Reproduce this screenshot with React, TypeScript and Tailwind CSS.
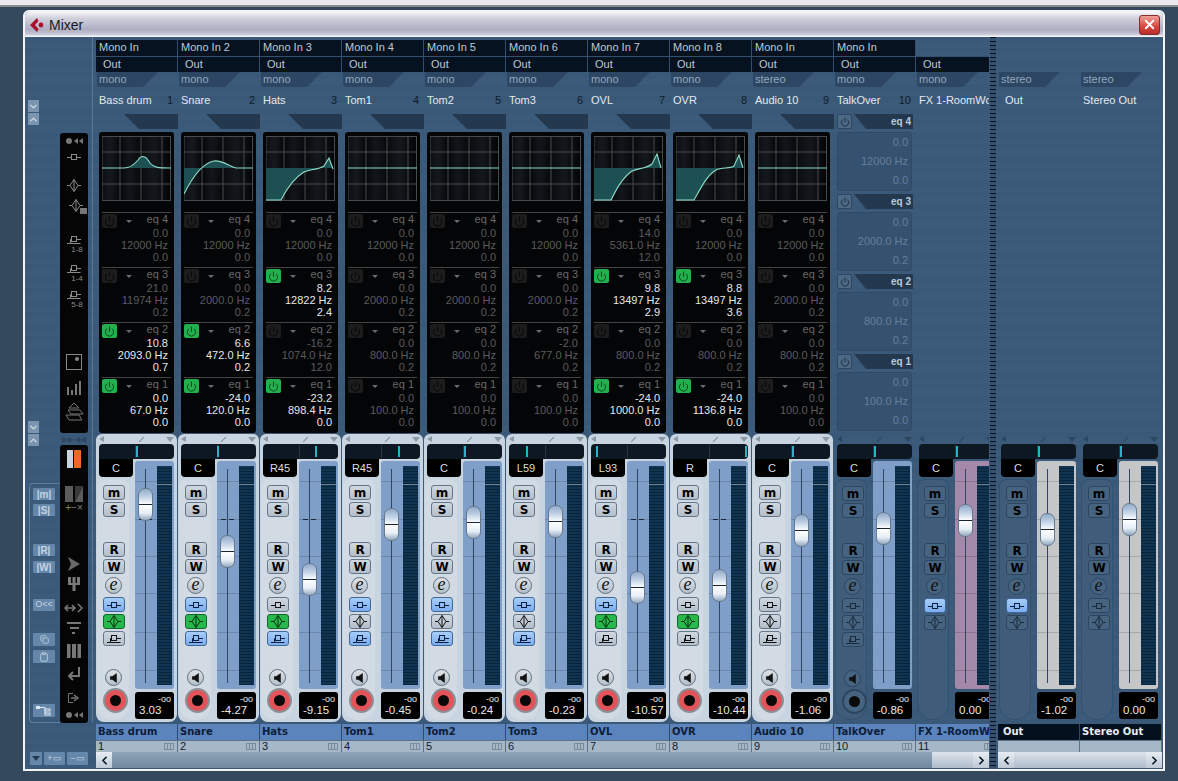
import React from 'react';
import { Power, X, ChevronLeft, ChevronRight, ChevronDown, ChevronUp, Copy, Clipboard } from 'lucide-react';

type Band = { v: [string, string, string]; on?: boolean };
type Strip = {
  input?: string;
  out: string;
  kind: string;
  name: string;
  num?: number;
  curve?: string;
  eq?: Band[];
  pan: string;
  tick: number;
  thumb: number;
  value: string;
  b1?: boolean;
  b2?: boolean;
  b3?: boolean;
  blueE?: boolean;
};

const d4: Band = { v: ['0.0', '12000 Hz', '0.0'] };
const d3: Band = { v: ['0.0', '2000.0 Hz', '0.2'] };
const d2: Band = { v: ['0.0', '800.0 Hz', '0.2'] };
const d1: Band = { v: ['0.0', '100.0 Hz', '0.0'] };

const strips: Strip[] = [
  {
    input: 'Mono In', out: 'Out', kind: 'mono', name: 'Bass drum', num: 1, pan: 'C', tick: 40, thumb: 487, value: '3.03', b1: true, b2: true,
    curve: 'M0 32 L22 32 C28 32 32 29 36 24 C41 17 45 22 48 27 C52 32 56 32 69 32',
    eq: [d4, { v: ['21.0', '11974 Hz', '0.2'] }, { v: ['10.8', '2093.0 Hz', '0.7'], on: true }, { v: ['0.0', '67.0 Hz', '0.0'], on: true }],
  },
  {
    input: 'Mono In 2', out: 'Out', kind: 'mono', name: 'Snare', num: 2, pan: 'C', tick: 39, thumb: 534, value: '-4.27', b1: true, b2: true, b3: true,
    curve: 'M0 58 C8 42 18 27 30 25 C38 24 45 30 52 32 L69 32',
    eq: [d4, d3, { v: ['6.6', '472.0 Hz', '0.2'], on: true }, { v: ['-24.0', '120.0 Hz', '0.0'], on: true }],
  },
  {
    input: 'Mono In 3', out: 'Out', kind: 'mono', name: 'Hats', num: 3, pan: 'R45', tick: 55, thumb: 562, value: '-9.15', b2: true, b3: true,
    curve: 'M0 64 L15 64 C20 54 28 42 38 36 C44 33 52 34 58 30 L63 22 L67 33',
    eq: [d4, { v: ['8.2', '12822 Hz', '2.4'], on: true }, { v: ['-16.2', '1074.0 Hz', '12.0'] }, { v: ['-23.2', '898.4 Hz', '0.0'], on: true }],
  },
  { input: 'Mono In 4', out: 'Out', kind: 'mono', name: 'Tom1', num: 4, pan: 'R45', tick: 56, thumb: 507, value: '-0.45', b1: true, b3: true, curve: 'M0 32 L69 32', eq: [d4, d3, d2, d1] },
  { input: 'Mono In 5', out: 'Out', kind: 'mono', name: 'Tom2', num: 5, pan: 'C', tick: 40, thumb: 505, value: '-0.24', b1: true, b3: true, curve: 'M0 32 L69 32', eq: [d4, d3, d2, d1] },
  {
    input: 'Mono In 6', out: 'Out', kind: 'mono', name: 'Tom3', num: 6, pan: 'L59', tick: 20, thumb: 504, value: '-0.23', b1: true, b3: true, curve: 'M0 32 L69 32',
    eq: [d4, d3, { v: ['-2.0', '677.0 Hz', '0.2'] }, d1],
  },
  {
    input: 'Mono In 7', out: 'Out', kind: 'mono', name: 'OVL', num: 7, pan: 'L93', tick: 8, thumb: 570, value: '-10.57', b1: true, b2: true,
    curve: 'M0 64 L17 64 C22 54 28 42 38 35 C44 32 52 33 58 28 L63 18 L67 32',
    eq: [{ v: ['14.0', '5361.0 Hz', '12.0'] }, { v: ['9.8', '13497 Hz', '2.9'], on: true }, d2, { v: ['-24.0', '1000.0 Hz', '0.0'], on: true }],
  },
  {
    input: 'Mono In 8', out: 'Out', kind: 'mono', name: 'OVR', num: 8, pan: 'R', tick: 75, thumb: 568, value: '-10.44', b2: true,
    curve: 'M0 64 L18 64 C24 54 30 40 40 34 C46 31 54 33 58 30 L63 19 L67 32',
    eq: [d4, { v: ['8.8', '13497 Hz', '3.6'], on: true }, d2, { v: ['-24.0', '1136.8 Hz', '0.0'], on: true }],
  },
  { input: 'Mono In', out: 'Out', kind: 'stereo', name: 'Audio 10', num: 9, pan: 'C', tick: 40, thumb: 513, value: '-1.06', blueE: true, curve: 'M0 32 L69 32', eq: [d4, d3, d2, d1] },
];

const gridX = [0, 18, 39, 60, 68.5];
const gridY = [0.5, 16, 48, 64.5];
const ticks = [20, 58, 95, 132, 171, 209];

function EqCurve({ d }: { d: string }) {
  return (
    <svg width="69" height="65" viewBox="0 0 69 65" className="block bg-[linear-gradient(to_right,#0b0e12,#15191e_12%,#05070a_26%,#12161b_40%,#080a0d_55%,#14181c_75%,#020304)]">
      {gridX.map((x) => <line key={x} x1={x} x2={x} y1="0" y2="65" stroke="#474c4a" strokeWidth="1" />)}
      {gridY.map((y) => <line key={y} x1="0" x2="69" y1={y} y2={y} stroke="#474c4a" strokeWidth="1" />)}
      <path d={d + ' L69 32 L0 32 Z'} fill="#1d5053" />
      <path d={d} fill="none" stroke="#8fdcc8" strokeWidth="1.1" />
    </svg>
  );
}

function EqBand({ band, n }: { band: Band; n: number }) {
  const valueColor = band.on ? 'text-[#e8e8e8]' : 'text-[#5c5c5c]';
  return (
    <div className="h-[55px] mx-[3px] border-t border-[#444] flex flex-col">
      <div className="h-[14px] flex items-start">
        <div className={band.on ? 'w-[15px] h-[14px] mt-[1px] rounded-[2px] bg-[#23b04c] flex items-center justify-center' : 'w-[15px] h-[14px] mt-[1px] rounded-[2px] bg-[#1c1c1c] flex items-center justify-center'}>
          <Power size={11} strokeWidth={2} className={band.on ? 'text-[#0b3d1b]' : 'text-[#050505]'} />
        </div>
        <div className="ml-[9px] mt-[7px] w-0 h-0 border-x-[3px] border-x-transparent border-t-[3px] border-t-[#6a6a6a]" />
        <span className="ml-auto mt-[1px] pr-[3px] text-[11px] leading-[11px] text-[#686868]">eq {n}</span>
      </div>
      {band.v.map((t, i) => (
        <div key={i} className={'h-[12px] leading-[12px] text-right pr-[3px] text-[11px] whitespace-nowrap ' + valueColor}>{t}</div>
      ))}
    </div>
  );
}

function HiGlyph() {
  return (
    <svg width="16" height="10" viewBox="0 0 16 10" fill="none" stroke="currentColor" strokeWidth="1">
      <path d="M1 5.5h4M11 5.5h4" />
      <rect x="5.5" y="2.5" width="5" height="5" />
    </svg>
  );
}

function MidGlyph() {
  return (
    <svg width="16" height="13" viewBox="0 0 16 13" fill="none" stroke="currentColor" strokeWidth="1">
      <path d="M1 6.5h3M12 6.5h3M8 .5L12 6.5 8 12.5 4 6.5Z M8 .5v12" />
    </svg>
  );
}

function LoGlyph() {
  return (
    <svg width="16" height="11" viewBox="0 0 16 11" fill="none" stroke="currentColor" strokeWidth="1">
      <path d="M1 9.5h3.5V5.5h1M10.5 5.5h4.5M4.5 9.5h10" />
      <rect x="5.5" y="2.5" width="5" height="5" />
    </svg>
  );
}

function KeyBtn({ label, dark, className }: { label: string; dark: boolean; className?: string }) {
  return (
    <div className={(dark
      ? 'bg-[#46637f] border-[#2c4660] '
      : 'bg-[linear-gradient(to_bottom,#cfd7df,#b4bfca)] border-[#66768a] ') + 'w-[22px] h-[15px] border rounded-[3px] flex items-center justify-center text-[12px] leading-none font-bold text-black font-[\'DejaVu_Sans\',sans-serif] ' + (className ?? '')}>
      {label}
    </div>
  );
}

function ModeBtn({ state, dark, className, children }: { state: 'off' | 'blue' | 'green'; dark: boolean; className?: string; children: React.ReactNode }) {
  let look = 'bg-[linear-gradient(to_bottom,#cfd7df,#b4bfca)] border-[#66768a] text-[#111]';
  if (dark) look = 'bg-[#46637f] border-[#2c4660] text-[#1a2a3a]';
  if (state === 'blue') look = 'bg-[linear-gradient(to_bottom,#a6cdfa,#7cadee)] border-[#3f6797] text-[#0a2040]';
  if (state === 'green') look = 'bg-[#28b84c] border-[#13652b] text-[#05300f]';
  return <div className={'w-[22px] h-[15px] border rounded-[3px] flex items-center justify-center ' + look + ' ' + (className ?? '')}>{children}</div>;
}

function Round({ dark, className, children }: { dark: boolean; className?: string; children: React.ReactNode }) {
  return (
    <div className={(dark ? 'bg-[#46637f] border-[#2c4660] ' : 'bg-[linear-gradient(to_bottom,#dde2e7,#b4bfca)] border-[#5f6e7e] ') + 'w-[17px] h-[17px] ml-[2px] rounded-full border flex items-center justify-center ' + (className ?? '')}>
      {children}
    </div>
  );
}

function ChannelFader({ s, dark, mode, trackClass }: { s: Strip; dark: boolean; mode: 'full' | 'out'; trackClass: string }) {
  return (
    <div className={(dark ? '' : 'bg-[#c8d4df] ') + 'mt-[1px] w-[81px] h-[288px] rounded-t-[6px] rounded-b-[8px] flex flex-col'}>
      <div className="h-[10px] flex items-center px-[3px]">
        <div className={dark ? 'w-0 h-0 border-y-[3px] border-y-transparent border-r-[5px] border-r-[#2c4660]' : 'w-0 h-0 border-y-[3px] border-y-transparent border-r-[5px] border-r-[#8c9aa8]'} />
        <div className={dark ? 'ml-[34px] w-[7px] h-px -rotate-45 bg-[#2c4660]' : 'ml-[34px] w-[7px] h-px -rotate-45 bg-[#7f8e9d]'} />
        <div className={dark ? 'ml-auto w-0 h-0 border-x-[4px] border-x-transparent border-t-[5px] border-t-[#2c4660]' : 'ml-auto w-0 h-0 border-x-[4px] border-x-transparent border-t-[5px] border-t-[#8c9aa8]'} />
      </div>
      <div className="relative mx-[3px] h-[15px] rounded-t-[4px] rounded-br-[4px] bg-[#0e1822]">
        <div className="absolute left-[36px] top-[1px] w-px h-[13px] bg-[#2a3440]" />
        <div className="absolute top-[2px] w-[2px] h-[11px] bg-[#23b5c8]" style={{ left: s.tick - 3 }} />
      </div>
      <div className="flex">
        <div className="ml-[3px] w-[34px]">
          <div className="h-[18px] bg-black rounded-b-[4px] flex items-center justify-center text-[11px] text-[#dcdcdc] leading-none">{s.pan}</div>
          <div className={(dark ? 'bg-[#3f5c7a] border border-[#33506c] ' : 'bg-[#d2dbe3] ') + '-ml-[2px] mt-[2px] w-[32px] h-[241px] rounded-t-[8px] rounded-b-[15px] pt-[6px] pl-[6px] flex flex-col items-start'}>
            <KeyBtn label="m" dark={dark} />
            <KeyBtn label="S" dark={dark} className="mt-[2px]" />
            <KeyBtn label="R" dark={dark} className="mt-[25px]" />
            <KeyBtn label="W" dark={dark} className="mt-[2px]" />
            <Round dark={dark} className={s.blueE ? 'mt-[3px] !bg-[#7cadee]' : 'mt-[3px]'}>
              <span className="font-['Liberation_Serif',serif] italic text-[18px] leading-none text-[#111] -mt-[4px]">e</span>
            </Round>
            <ModeBtn dark={dark} state={s.b1 ? 'blue' : 'off'} className="mt-[3px]"><HiGlyph /></ModeBtn>
            <ModeBtn dark={dark} state={s.b2 ? 'green' : 'off'} className="mt-[2px]"><MidGlyph /></ModeBtn>
            {mode === 'full' && <ModeBtn dark={dark} state={s.b3 ? 'blue' : 'off'} className="mt-[2px]"><LoGlyph /></ModeBtn>}
            {mode === 'full' && (
              <Round dark={dark} className="mt-[23px]">
                <svg width="10" height="10" viewBox="0 0 9 9" fill="#111"><path d="M1 3h2l4-3v9L3 6H1Z" /></svg>
              </Round>
            )}
            {mode === 'full' && (
              <div className={(dark ? 'bg-[#46637f] border-[#2c4660] ' : 'bg-[#e2545a] border-[#8a8f96] ') + 'mt-[2px] w-[25px] h-[25px] rounded-full border-2 flex items-center justify-center'}>
                <div className="w-[11px] h-[11px] rounded-full bg-[#0a0a0a]" />
              </div>
            )}
          </div>
        </div>
        <div className="ml-[2px] w-[39px] pt-[2px]">
          <div className={'relative h-[228px] rounded-[3px] ' + trackClass}>
            {ticks.map((t) => <div key={t} className="absolute left-0 w-[22px] h-px bg-black/15" style={{ top: t }} />)}
            <div className="absolute left-[4px] top-[58px] w-[5px] h-px bg-[#1b2735]" />
            <div className="absolute left-[12px] top-[58px] w-[5px] h-px bg-[#1b2735]" />
            <div className="absolute left-[10px] top-[8px] w-px h-[214px] bg-[#2f4662]" />
            <div className="absolute right-[2px] top-[5px] w-[15px] h-[219px] bg-[repeating-linear-gradient(to_bottom,#0f3552_0,#0f3552_2px,#092338_2px,#092338_3px)]">
              <div className="absolute left-0 top-[18px] w-full h-px bg-[#6d7f8e]" />
            </div>
            <div
              className="absolute left-[3px] w-[15px] h-[33px] rounded-[7px] border border-[#66798c] bg-[linear-gradient(to_bottom,#93abca,#c0d1e5_25%,#f8fbff_48%,#1a2430_48%,#1a2430_51%,#ffffff_51%,#e6eef6_78%,#93a8bf)]"
              style={{ top: s.thumb - 460 }}
            />
          </div>
          <div className="relative mt-[3px] h-[27px] rounded-[3px] bg-black text-[#e8e8e8]">
            <div className="text-right pr-[3px] pt-[3px] text-[9px] leading-[9px]">-oo</div>
            <div className="pl-[4px] text-[11.5px] leading-[12px]">{s.value}</div>
          </div>
        </div>
      </div>
    </div>
  );
}

function DimEq() {
  const blocks = [
    { n: 4, v: d4 },
    { n: 3, v: d3 },
    { n: 2, v: d2 },
    { n: 1, v: d1 },
  ];
  return (
    <div className="h-[320px]">
      {blocks.map((b) => (
        <div key={b.n} className="h-[80px] pl-[3px] pr-[3px] pt-[1px]">
          <div className="flex h-[15px]">
            <div className="w-[15px] h-[15px] rounded-[2px] bg-[#4c6986] border border-[#2c4660] flex items-center justify-center">
              <Power size={10} className="text-[#142433]" />
            </div>
            <div className="ml-[2px] flex-1 bg-[#24394f] [clip-path:polygon(0_0,100%_0,100%_100%,12px_100%)] text-right pr-[2px] text-[10px] leading-[15px] font-bold text-[#bccadb]">eq {b.n}</div>
          </div>
          <div className="mt-[3px] h-[59px] w-[75px] rounded-[3px] bg-[#34516f] border border-[#2f4a66] text-right pr-[3px] text-[11px] text-[#667f99] flex flex-col justify-around">
            {b.v.v.map((t, i) => <div key={i} className="leading-[13px]">{t}</div>)}
          </div>
        </div>
      ))}
    </div>
  );
}

function FooterLabel({ name, num, black, indent }: { name: string; num?: number; black?: boolean; indent?: boolean }) {
  return (
    <div className="mt-[2px]">
      <div className={(black ? 'bg-[#03101d] text-[#e8edf2] ' : 'bg-[#5b83bc] text-[#0c1d38] ') + (indent ? 'pl-[5px] ' : 'pl-[2px] ') + "h-[16px] border-r border-[#2f4a6a] text-[10px] leading-[16px] font-bold whitespace-nowrap overflow-hidden font-['DejaVu_Sans',sans-serif]"}>
        {name}
      </div>
      <div className="h-[12px] bg-[#a6b7c8] border-r border-t border-[#5d7288] flex items-center pl-[2px] pr-[3px] text-[11px] leading-none text-[#10202f]">
        {num}
        {num !== undefined && (
          <div className="ml-auto w-[10px] h-[7px] border border-[#7a8b9c] flex">
            <div className="flex-1 border-r border-[#7a8b9c]" />
            <div className="flex-1 border-r border-[#7a8b9c]" />
            <div className="flex-1" />
          </div>
        )}
      </div>
    </div>
  );
}

function TopRows({ s, noInput, outBlank }: { s: { input?: string; out?: string; kind: string }; noInput?: boolean; outBlank?: boolean }) {
  return (
    <>
      <div className={(noInput ? '' : 'bg-[#06121f] border-r border-[#31506f] ') + 'h-[16px] pl-[3px] text-[11px] leading-[15px] text-[#bfcad5]'}>{s.input}</div>
      <div className={(outBlank ? '' : 'bg-[#06121f] border-r border-t border-[#31506f] ') + 'h-[16px] pl-[7px] text-[11px] leading-[15px] text-[#bfcad5]'}>{s.out}</div>
      <div className="h-[15px] ml-[1px] w-[61px] rounded-bl-[3px] bg-[#2c4664] [clip-path:polygon(0_0,100%_0,calc(100%-15px)_100%,0_100%)] pl-[2px] text-[11px] leading-[15px] text-[#93a8bc]">{s.kind}</div>
    </>
  );
}

function Channel({ s }: { s: Strip }) {
  return (
    <div className="w-[82px] shrink-0">
      <TopRows s={s} />
      <div className="h-[26px] flex items-center pl-[3px] pr-[5px] text-[11px] text-[#e3e9ef] whitespace-nowrap">
        {s.name}
        <span className="ml-auto text-[#0d1c2b]">{s.num}</span>
      </div>
      <div className="mt-[1px] ml-[28px] w-[54px] h-[15px] bg-[#24394f] [clip-path:polygon(0_0,100%_0,100%_100%,15px_100%)]" />
      <div className="mt-[3px] ml-[3px] w-[75px] h-[301px] pt-[4px] rounded-[3px] bg-[#040506]">
        <div className="mx-[3px]">
          <EqCurve d={s.curve ?? 'M0 32 L69 32'} />
        </div>
        <div className="mt-[11px]">
          {s.eq?.map((b, i) => <EqBand key={i} band={b} n={4 - i} />)}
        </div>
      </div>
      <ChannelFader s={s} dark={false} mode="full" trackClass="bg-[#7f9fc9]" />
      <FooterLabel name={s.name} num={s.num} />
    </div>
  );
}

const talkOver: Strip = { input: 'Mono In', out: 'Out', kind: 'mono', name: 'TalkOver', num: 10, pan: 'C', tick: 40, thumb: 511, value: '-0.86' };
const fxStrip: Strip = { out: 'Out', kind: 'mono', name: 'FX 1-RoomWorks', num: 11, pan: 'C', tick: 40, thumb: 503, value: '0.00', b1: true };
const outStrip: Strip = { out: '', kind: 'stereo', name: 'Out', pan: 'C', tick: 40, thumb: 512, value: '-1.02', b1: true };
const stereoStrip: Strip = { out: '', kind: 'stereo', name: 'Stereo Out', pan: 'C', tick: 40, thumb: 502, value: '0.00' };

function DarkChannel({ s, eq, track, outType }: { s: Strip; eq?: boolean; track: string; outType?: boolean }) {
  return (
    <div className="w-[82px] shrink-0">
      <TopRows s={s} noInput={!s.input} outBlank={outType} />
      <div className={(outType && s.name === 'Out' ? 'pl-[7px] ' : 'pl-[3px] ') + 'h-[26px] flex items-center pr-[5px] text-[11px] text-[#e3e9ef] whitespace-nowrap'}>
        {s.name}
        {eq && <span className="ml-auto text-[#0d1c2b]">{s.num}</span>}
      </div>
      {eq ? <DimEq /> : <div className="h-[320px]" />}
      <ChannelFader s={s} dark mode={eq ? 'full' : 'out'} trackClass={track} />
      <FooterLabel name={s.name} num={outType ? undefined : s.num} black={outType} indent={outType && s.name === 'Out'} />
    </div>
  );
}

function Dots() {
  return (
    <div className="flex items-center gap-[1px] h-[8px]">
      <div className="w-[6px] h-[6px] rounded-full bg-[#777]" />
      <div className="w-0 h-0 border-y-[3px] border-y-transparent border-r-[4px] border-r-[#777] ml-[1px]" />
      <div className="w-0 h-0 border-y-[3px] border-y-transparent border-r-[4px] border-r-[#777]" />
    </div>
  );
}

function LoBank({ label, className }: { label: string; className: string }) {
  return (
    <div className={'flex flex-col items-center h-[22px] text-[#8a8a8a] ' + className}>
      <LoGlyph />
      <span className="text-[8px] leading-[9px] ml-[6px]">{label}</span>
    </div>
  );
}

function LeftPanel() {
  const dim = 'bg-[#6587aa] text-[#c5d3e2] rounded-[1px] flex items-center justify-center';
  const arrow = 'w-[11px] h-[12px] ml-[3px] bg-[#7b95b0] text-[#d6e0ea] flex items-center justify-center';
  return (
    <div className="w-[71px] shrink-0 h-full pr-[3px]">
      <div className="w-[68px] h-[685px] border-r border-[#5b7b9c]">
        <div className="h-[63px]" />
        <div className={arrow}><ChevronDown size={11} strokeWidth={2.5} /></div>
        <div className={arrow + ' mt-[1px]'}><ChevronUp size={11} strokeWidth={2.5} /></div>
        <div className="h-[8px]" />
        <div className="flex h-[301px]">
          <div className="w-[35px] flex flex-col justify-end pb-[1px]">
            <div className={arrow}><ChevronDown size={11} strokeWidth={2.5} /></div>
          </div>
          <div className="w-[28px] h-[300px] rounded-[3px] bg-[#050505] flex flex-col items-center">
            <div className="mt-[4px]"><Dots /></div>
            <div className="mt-[7px] text-[#8a8a8a]"><HiGlyph /></div>
            <div className="mt-[17px] text-[#8a8a8a]"><MidGlyph /></div>
            <div className="mt-[7px] ml-[4px] relative text-[#8a8a8a]">
              <MidGlyph />
              <div className="absolute -right-[3px] bottom-[-2px] w-[7px] h-[6px] bg-[#777]" />
            </div>
            <LoBank label="1-8" className="mt-[22px]" />
            <LoBank label="1-4" className="mt-[7px]" />
            <LoBank label="5-8" className="mt-[4px]" />
            <div className="mt-[43px] w-[16px] h-[16px] border border-[#888] flex justify-end p-[2px]"><div className="w-[4px] h-[4px] rounded-full bg-[#888]" /></div>
            <svg className="mt-[9px]" width="16" height="16" viewBox="0 0 16 16" fill="#777"><path d="M1 8h2v8H1ZM5 11h2v5H5ZM9 5h2v11H9ZM13 2h2v14h-2Z" /></svg>
            <svg className="mt-[7px]" width="20" height="20" viewBox="0 0 20 20" fill="none" stroke="#777"><path d="M10 1 5 6h10ZM4 8h12l3 4H7ZM2 13h13l3 5H5Z" /></svg>
          </div>
        </div>
        <div className="flex h-[289px]">
          <div className="w-[35px]">
            <div className={arrow}><ChevronUp size={11} strokeWidth={2.5} /></div>
            <div className="mt-[37px] ml-[4px] w-[31px] h-[240px] border-y border-l border-[#5d7d9f] rounded-l-[4px] pl-[3px] pt-[4px] flex flex-col items-start">
              <div className={dim + ' w-[22px] h-[12px] text-[10px] font-bold'}>|m|</div>
              <div className={dim + ' w-[22px] h-[12px] mt-[4px] text-[10px] font-bold'}>|S|</div>
              <div className={dim + ' w-[22px] h-[12px] mt-[28px] text-[10px] font-bold'}>|R|</div>
              <div className={dim + ' w-[22px] h-[12px] mt-[5px] text-[10px] font-bold'}>|W|</div>
              <div className={dim + ' w-[22px] h-[12px] mt-[26px] text-[9px]'}>O&lt;&lt;</div>
              <div className={dim + ' w-[22px] h-[13px] mt-[22px]'}><Copy size={9} /></div>
              <div className={dim + ' w-[22px] h-[13px] mt-[4px]'}><Clipboard size={10} /></div>
              <div className={dim + ' w-[22px] h-[13px] mt-[41px]'}>
                <svg width="16" height="10" viewBox="0 0 16 10" fill="none" stroke="#dfe7ef"><rect x="0.5" y="0.5" width="3" height="2" fill="#dfe7ef" /><path d="M4 1.5h5v6" /><rect x="9" y="3" width="5" height="2" /><rect x="9" y="7" width="5" height="2" /></svg>
              </div>
            </div>
          </div>
          <div className="w-[28px]">
            <div className="h-[11px] flex items-center justify-center gap-[3px] text-[8px] leading-none text-[#2d4762]">▶▶◀◀</div>
            <div className="w-[28px] h-[278px] rounded-[3px] bg-[#050505] flex flex-col items-center">
              <div className="mt-[5px] h-[18px] w-[14px] flex gap-[1px]">
                <div className="w-[6px] bg-[#c9d3dc]" />
                <div className="w-[7px] bg-[#ee6a23]" />
              </div>
              <svg className="mt-[18px]" width="20" height="16" viewBox="0 0 20 16"><path d="M1 0h8v16H1Z" fill="#5c5c5c" /><path d="M11 16 19 0v16Z" fill="#5c5c5c" /><path d="M11 0h8L11 16Z" fill="#3a3a3a" /></svg>
              <div className="mt-[2px] h-[8px] text-[10px] leading-[8px] text-[#808080] whitespace-nowrap">+−×</div>
              <svg className="mt-[45px]" width="14" height="14" viewBox="0 0 14 14" fill="#6a6a6a"><path d="M1 0 13 7 1 14 4 7Z" /></svg>
              <svg className="mt-[6px]" width="12" height="14" viewBox="0 0 12 14" fill="#7a7a7a"><path d="M0 0h3v6h1.5V0h3v6H9V0h3v8H7.5v6h-3V8H0Z" /></svg>
              <svg className="mt-[12px]" width="20" height="10" viewBox="0 0 20 10" fill="none" stroke="#7a7a7a" strokeWidth="1.5"><path d="M1 5h10M4 2 1 5l3 3M8 2l3 3-3 3M14 1l4 4-4 4" /></svg>
              <svg className="mt-[8px]" width="14" height="14" viewBox="0 0 14 14" fill="#777"><path d="M0 1h14v2H0ZM3 6h9v2H3ZM5 11h3v2H5Z" /></svg>
              <svg className="mt-[9px]" width="14" height="14" viewBox="0 0 14 14" fill="#777"><path d="M0 0h3.5v14H0ZM5 0h4v14H5ZM10.5 0H14v14h-3.5Z" /></svg>
              <svg className="mt-[9px]" width="14" height="14" viewBox="0 0 14 14" fill="none" stroke="#777" strokeWidth="2"><path d="M12 0v9H3M6 5 2 9l4 4" /></svg>
              <svg className="mt-[12px]" width="12" height="10" viewBox="0 0 12 10" fill="none" stroke="#777"><path d="M5 .5H.5v9H5" /><path d="M3 5h5M6 2l4 3-4 3" strokeWidth="1.5" /></svg>
              <div className="mt-[8px]"><Dots /></div>
            </div>
          </div>
        </div>
      </div>
      <div className="mt-[30px] pl-[5px] flex gap-[2px]">
        <div className={dim + ' w-[12px] h-[13px]'}><div className="w-0 h-0 border-x-[4px] border-x-transparent border-t-[5px] border-t-[#26394d]" /></div>
        <div className={dim + ' w-[21px] h-[13px] text-[9px]'}>+▭</div>
        <div className={dim + ' w-[21px] h-[13px] text-[9px]'}>−▭</div>
      </div>
    </div>
  );
}

function Scroll({ thumb }: { thumb: boolean }) {
  const arrow = 'w-[16px] h-[16px] shrink-0 bg-[linear-gradient(to_bottom,#e8edf2,#bdc9d5)] text-[#0a1520] flex items-center justify-center';
  return (
    <div className="h-[16px] flex">
      <div className={arrow}><ChevronLeft size={13} strokeWidth={3} /></div>
      {thumb ? (
        <>
          <div className="flex-1 bg-[linear-gradient(to_bottom,#8fa5b9,#6f889f)]" />
          <div className="w-[41px] bg-[linear-gradient(to_bottom,#dde4eb,#aebccb)]" />
        </>
      ) : (
        <div className="flex-1 bg-[linear-gradient(to_bottom,#dde4eb,#aebccb)]" />
      )}
      <div className={arrow}><ChevronRight size={13} strokeWidth={3} /></div>
    </div>
  );
}

export default function App() {
  return (
    <div className="w-[1178px] h-[781px] overflow-hidden bg-[#34495e] font-['Liberation_Sans',Arial,sans-serif]">
      <div className="h-[5px] bg-[#e9e9ee]" />
      <div className="h-[2px] bg-[#8a8d90]" />
      <div className="ml-[23px] mt-[3px] w-[1142px] h-[761px] rounded-t-[6px] border-2 border-[#f4f4f8] bg-[repeating-linear-gradient(to_bottom,#3a5979_0,#3a5979_6px,#3c5b7b_6px,#3c5b7b_12px)] flex flex-col">
        <div className="h-[25px] shrink-0 rounded-t-[4px] flex items-center pl-[5px] pr-[3px] bg-[linear-gradient(to_bottom,#f6f6f9,#d0d0dc_25%,#aeaec4_70%,#c4c4d4_88%,#ffffff)]">
          <svg width="16" height="14" viewBox="0 0 16 14">
            <path d="M7 0 0 7l7 7 1.5-3L5 7l3.5-4Z" fill="#a8102e" />
            <circle cx="11" cy="7" r="2.4" fill="#a8102e" />
          </svg>
          <span className="ml-[3px] text-[14px] leading-none text-[#1c1c24]">Mixer</span>
          <div className="ml-auto w-[21px] h-[20px] rounded-[3px] border border-[#8a2a2a] bg-[linear-gradient(to_bottom,#f0a098,#d8443c_60%,#b82e2c)] flex items-center justify-center">
            <X size={15} strokeWidth={3} className="text-white" />
          </div>
        </div>
        <div className="flex flex-1">
          <LeftPanel />
          <div className="w-[893px] shrink-0 overflow-hidden pt-[3px]">
            <div className="flex">
              {strips.map((s) => <Channel key={s.num} s={s} />)}
              <DarkChannel s={talkOver} eq track="bg-[#7f9fc9]" />
              <DarkChannel s={fxStrip} track="bg-[#a489aa]" />
            </div>
            <Scroll thumb />
          </div>
          <div className="w-[9px] shrink-0 px-[1px]">
            <div className="w-[6px] h-full bg-[repeating-linear-gradient(to_bottom,#08121c_0,#08121c_1px,#34526f_1px,#34526f_4px)]" />
          </div>
          <div className="w-[164px] shrink-0 overflow-hidden pt-[3px]">
            <div className="flex">
              <DarkChannel s={outStrip} outType track="bg-[#c5c6c7]" />
              <DarkChannel s={stereoStrip} outType track="bg-[#c5c6c7]" />
            </div>
            <Scroll thumb={false} />
          </div>
        </div>
      </div>
    </div>
  );
}
